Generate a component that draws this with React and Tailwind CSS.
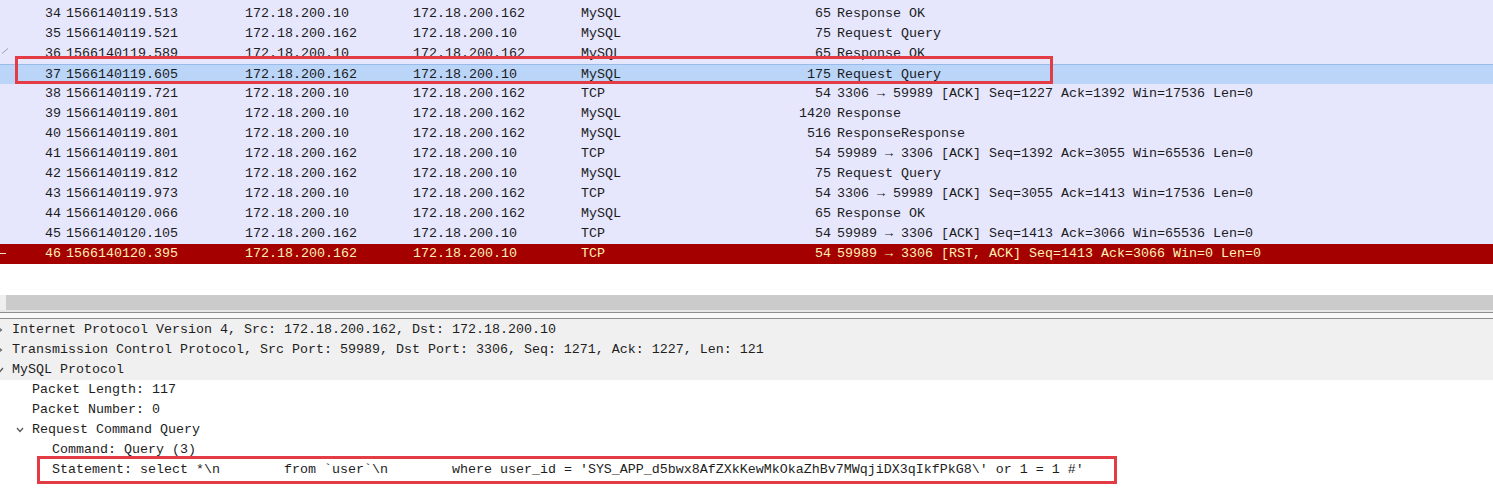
import React from "react";

const rows = [
  ["34", "1566140119.513", "172.18.200.10", "172.18.200.162", "MySQL", "65", "Response OK"],
  ["35", "1566140119.521", "172.18.200.162", "172.18.200.10", "MySQL", "75", "Request Query"],
  ["36", "1566140119.589", "172.18.200.10", "172.18.200.162", "MySQL", "65", "Response OK"],
  ["37", "1566140119.605", "172.18.200.162", "172.18.200.10", "MySQL", "175", "Request Query"],
  ["38", "1566140119.721", "172.18.200.10", "172.18.200.162", "TCP", "54", "3306 → 59989 [ACK] Seq=1227 Ack=1392 Win=17536 Len=0"],
  ["39", "1566140119.801", "172.18.200.10", "172.18.200.162", "MySQL", "1420", "Response"],
  ["40", "1566140119.801", "172.18.200.10", "172.18.200.162", "MySQL", "516", "ResponseResponse"],
  ["41", "1566140119.801", "172.18.200.162", "172.18.200.10", "TCP", "54", "59989 → 3306 [ACK] Seq=1392 Ack=3055 Win=65536 Len=0"],
  ["42", "1566140119.812", "172.18.200.162", "172.18.200.10", "MySQL", "75", "Request Query"],
  ["43", "1566140119.973", "172.18.200.10", "172.18.200.162", "TCP", "54", "3306 → 59989 [ACK] Seq=3055 Ack=1413 Win=17536 Len=0"],
  ["44", "1566140120.066", "172.18.200.10", "172.18.200.162", "MySQL", "65", "Response OK"],
  ["45", "1566140120.105", "172.18.200.162", "172.18.200.10", "TCP", "54", "59989 → 3306 [ACK] Seq=1413 Ack=3066 Win=65536 Len=0"],
  ["46", "1566140120.395", "172.18.200.162", "172.18.200.10", "TCP", "54", "59989 → 3306 [RST, ACK] Seq=1413 Ack=3066 Win=0 Len=0"],
];

function Cells({ r }) {
  return (
    <>
      <div className="w-[61px] shrink-0 text-right">{r[0]}</div>
      <div className="w-[184px] shrink-0 pl-[5px]">{r[1]}</div>
      <div className="w-[168px] shrink-0">{r[2]}</div>
      <div className="w-[168px] shrink-0">{r[3]}</div>
      <div className="w-[170px] shrink-0">{r[4]}</div>
      <div className="w-[80px] shrink-0 text-right">{r[5]}</div>
      <div className="pl-[6px] whitespace-pre">{r[6]}</div>
    </>
  );
}

function PacketRow({ r }) {
  const n = r[0];
  if (n === "37") {
    return (
      <div className="flex h-[20px] items-center bg-[#bad5f8] border-t border-[#98bbe9] text-[#1c1c1c]">
        <Cells r={r} />
      </div>
    );
  }
  if (n === "46") {
    return (
      <div className="relative flex h-[20px] items-center bg-[#a40000] text-[#fff0b4]">
        <div className="absolute left-0 top-[9px] h-px w-[6px] bg-[#f2e0d0]" />
        <Cells r={r} />
      </div>
    );
  }
  return (
    <div className="relative flex h-[20px] items-center bg-[#e6e6fc] text-[#1c1c1c]">
      {n === "36" && (
        <svg className="absolute left-[1px] top-[4px]" width="8" height="6" viewBox="0 0 8 6">
          <path d="M1 5.5 L7 0.5" stroke="#9a9ab0" strokeWidth="1" fill="none" />
        </svg>
      )}
      <Cells r={r} />
    </div>
  );
}

function ChevronRight({ className }) {
  return (
    <svg className={className} width="6" height="8" viewBox="0 0 6 8">
      <path d="M1 1 L4.5 4 L1 7" stroke="#606060" strokeWidth="1.2" fill="none" />
    </svg>
  );
}

function ChevronDown({ className }) {
  return (
    <svg className={className} width="8" height="6" viewBox="0 0 8 6">
      <path d="M1 1 L4 4.5 L7 1" stroke="#505050" strokeWidth="1.2" fill="none" />
    </svg>
  );
}

export default function App() {
  return (
    <div className="relative w-[1493px] h-[489px] overflow-hidden bg-white font-['Liberation_Mono','DejaVu_Sans_Mono',monospace] text-[13.33px] leading-[20px]">
      {/* packet list */}
      <div className="flex flex-col">
        <div className="h-[4px] bg-[#e6e6fc]" />
        {rows.map((r) => (
          <PacketRow key={r[0]} r={r} />
        ))}
      </div>

      {/* empty area */}
      <div className="h-[31px] bg-white" />

      {/* horizontal scrollbar */}
      <div className="flex h-[15px]">
        <div className="w-[6px] bg-[#efefef]" />
        <div className="flex-1 bg-[#cbcbcb]" />
      </div>

      {/* splitter */}
      <div className="h-[2px] bg-[#e6e6e6]" />
      <div className="h-px bg-[#8c8c8c]" />
      <div className="h-[5px] bg-[#f8f8f8]" />
      <div className="h-px bg-[#8c8c8c]" />
      <div className="h-px bg-[#f0f0f0]" />

      {/* packet details */}
      <div className="flex flex-col text-[#1e1e1e]">
        <div className="flex h-[20px] items-center bg-[#f0f0f0]">
          <div className="w-[12px] shrink-0 flex items-center">
            <ChevronRight className="-ml-[3px]" />
          </div>
          <span className="whitespace-pre">Internet Protocol Version 4, Src: 172.18.200.162, Dst: 172.18.200.10</span>
        </div>
        <div className="flex h-[20px] items-center bg-[#f0f0f0]">
          <div className="w-[12px] shrink-0 flex items-center">
            <ChevronRight className="-ml-[3px]" />
          </div>
          <span className="whitespace-pre">Transmission Control Protocol, Src Port: 59989, Dst Port: 3306, Seq: 1271, Ack: 1227, Len: 121</span>
        </div>
        <div className="flex h-[20px] items-center bg-[#f0f0f0]">
          <div className="w-[12px] shrink-0 flex items-center">
            <ChevronDown className="-ml-[4px]" />
          </div>
          <span className="whitespace-pre">MySQL Protocol</span>
        </div>
        <div className="flex h-[20px] items-center">
          <div className="w-[32px] shrink-0" />
          <span className="whitespace-pre">Packet Length: 117</span>
        </div>
        <div className="flex h-[20px] items-center">
          <div className="w-[32px] shrink-0" />
          <span className="whitespace-pre">Packet Number: 0</span>
        </div>
        <div className="flex h-[20px] items-center">
          <div className="w-[32px] shrink-0 flex items-center">
            <ChevronDown className="ml-[16px]" />
          </div>
          <span className="whitespace-pre">Request Command Query</span>
        </div>
        <div className="flex h-[20px] items-center">
          <div className="w-[52px] shrink-0" />
          <span className="whitespace-pre">Command: Query (3)</span>
        </div>
        <div className="flex h-[20px] items-center">
          <div className="w-[52px] shrink-0" />
          <span className="whitespace-pre">{"Statement: select *\\n        from `user`\\n        where user_id = 'SYS_APP_d5bwx8AfZXkKewMkOkaZhBv7MWqjiDX3qIkfPkG8\\' or 1 = 1 #'"}</span>
        </div>
      </div>

      {/* annotation boxes */}
      <div className="absolute left-[15px] top-[56px] w-[1038px] h-[28px] border-[3px] border-[#e43c44]" />
      <div className="absolute left-[37px] top-[456px] w-[1080px] h-[28px] border-[3px] border-[#e43c44]" />
    </div>
  );
}
